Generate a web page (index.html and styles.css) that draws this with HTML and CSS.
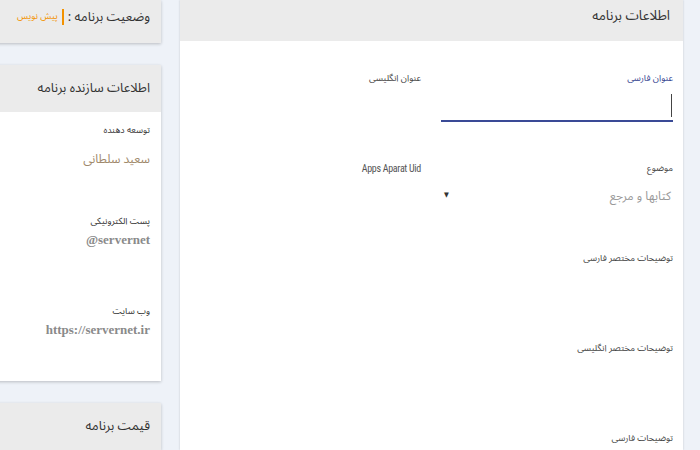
FILE: index.html
```html
<!DOCTYPE html>
<html lang="fa" dir="rtl">
<head>
    <meta charset="UTF-8">
    <meta name="viewport" content="width=device-width, initial-scale=1.0">
    <title>اطلاعات برنامه</title>
    <link rel="stylesheet" href="styles.css">
</head>
<body>
    <div class="page">
        <div class="main-card">
            <div class="card-head main-head">اطلاعات برنامه</div>
            <div class="form-grid">
                <div class="field">
                    <label class="lbl active">عنوان فارسی</label>
                    <div class="control focused"><span class="caret"></span></div>
                </div>
                <div class="field">
                    <label class="lbl">عنوان انگلیسی</label>
                    <div class="control"></div>
                </div>
                <div class="field">
                    <label class="lbl">موضوع</label>
                    <div class="control select">
                        <span class="select-value">کتابها و مرجع</span>
                        <span class="arrow">▼</span>
                    </div>
                </div>
                <div class="field">
                    <label class="lbl en">Apps Aparat Uid</label>
                    <div class="control"></div>
                </div>
                <div class="field wide">
                    <label class="lbl">توضیحات مختصر فارسی</label>
                    <div class="control"></div>
                </div>
                <div class="field wide">
                    <label class="lbl">توضیحات مختصر انگلیسی</label>
                    <div class="control"></div>
                </div>
                <div class="field wide last">
                    <label class="lbl">توضیحات فارسی</label>
                </div>
            </div>
        </div>
        <div class="side">
            <div class="card status-card">
                <span class="status-title">وضعیت برنامه :</span>
                <span class="status-value">پیش نویس</span>
            </div>
            <div class="card">
                <div class="card-head">اطلاعات سازنده برنامه</div>
                <div class="card-body">
                    <div class="info-item">
                        <div class="info-label">توسعه دهنده</div>
                        <div class="info-value name">سعید سلطانی</div>
                    </div>
                    <div class="info-item">
                        <div class="info-label">پست الکترونیکی</div>
                        <div class="info-value latin">@servernet</div>
                    </div>
                    <div class="info-item">
                        <div class="info-label">وب سایت</div>
                        <div class="info-value latin">https://servernet.ir</div>
                    </div>
                </div>
            </div>
            <div class="card">
                <div class="card-head">قیمت برنامه</div>
            </div>
        </div>
    </div>
</body>
</html>
```

FILE: styles.css
```css
body {
    margin: 0;
    background-color: #eef2f8;
    font-family: "Noto Sans Arabic", "DejaVu Sans Condensed", "DejaVu Sans", sans-serif;
    font-stretch: condensed;
    color: #333;
    overflow: hidden;
    height: 450px;
}
.page {
    display: flex;
    direction: rtl;
    align-items: flex-start;
    padding-right: 17px;
    gap: 19px;
    height: 450px;
    overflow: hidden;
}
.main-card {
    width: 503px;
    flex-shrink: 0;
    background-color: #fff;
    box-shadow: 0 0 2px rgba(0, 0, 0, 0.18);
    height: 450px;
}
.card-head {
    background-color: #ebebeb;
    font-size: 13px;
    height: 47px;
    line-height: 47px;
    padding-right: 11px;
    color: #333;
}
.main-head {
    height: 41px;
    line-height: 32px;
    padding-right: 13px;
    font-size: 13.5px;
}
.form-grid {
    display: grid;
    grid-template-columns: 232px 232px;
    column-gap: 20px;
    padding: 31px 10px 0 10px;
}
.field {
    margin-bottom: 40px;
}
.field.wide {
    grid-column: 1 / span 2;
}
.field.last {
    margin-bottom: 0;
}
.lbl {
    display: block;
    font-size: 9px;
    height: 14px;
    line-height: 14px;
    color: #444;
}
.lbl.active {
    color: #34438f;
}
.lbl.en {
    font-family: Roboto, "Liberation Sans", sans-serif;
    font-size: 10px;
    letter-spacing: -0.3px;
    color: #555;
}
.control {
    height: 36px;
    box-sizing: border-box;
    position: relative;
}
.control.focused {
    border-bottom: 2px solid #3a4a96;
}
.caret {
    position: absolute;
    right: 1px;
    top: 8px;
    width: 1px;
    height: 23px;
    background-color: #444;
}
.control.select {
    display: flex;
    justify-content: space-between;
    align-items: center;
    padding: 4px 2px 0 0;
}
.select-value {
    font-size: 12px;
    color: #999;
}
.arrow {
    font-size: 7px;
    color: #333;
    margin-left: 3px;
    margin-top: -4px;
}
.side {
    width: 171px;
    flex-shrink: 0;
    margin-left: -10px;
    display: flex;
    flex-direction: column;
    gap: 22px;
}
.card {
    background-color: #fff;
    box-shadow: 0 1px 3px rgba(0, 0, 0, 0.22);
}
.status-card {
    background-color: #ebebeb;
    height: 43px;
    line-height: 34px;
    padding-right: 11px;
    display: flex;
    align-items: flex-start;
}
.status-title {
    font-size: 13px;
    color: #333;
}
.status-value {
    font-size: 9px;
    color: #f39200;
    border-right: 2px solid #f39200;
    line-height: 16px;
    margin-top: 9px;
    margin-right: 4px;
    padding-right: 4px;
}
.card-body {
    padding: 12px 11px 0 11px;
    height: 269px;
    box-sizing: border-box;
}
.info-label {
    font-size: 9px;
    height: 14px;
    line-height: 14px;
    color: #333;
}
.info-value {
    margin-top: 11px;
    font-size: 12px;
    line-height: 22px;
    color: #a0896b;
}
.info-value.latin {
    font-family: "Liberation Serif", "DejaVu Serif", serif;
    font-weight: bold;
    font-size: 13px;
    line-height: 20px;
    color: #8a8a8a;
    margin-top: 1px;
    direction: ltr;
    text-align: right;
}
.info-item {
    margin-bottom: 44px;
}
.info-item:nth-child(2) {
    margin-bottom: 55px;
}
```
